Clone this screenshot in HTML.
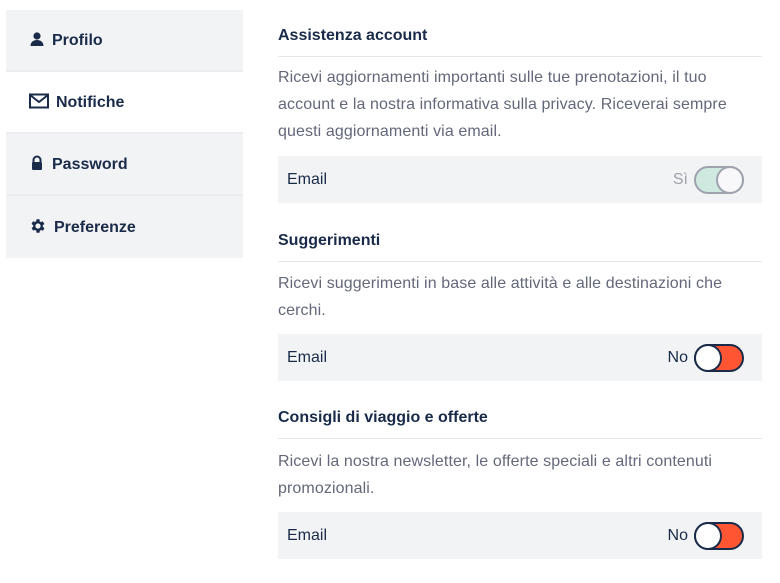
<!DOCTYPE html>
<html><head><meta charset="utf-8"><style>
*{box-sizing:border-box;margin:0;padding:0}
body{width:780px;height:583px;background:#fff;font-family:"Liberation Sans",sans-serif;color:#1a2b49;position:relative;overflow:hidden}
.side{position:absolute;left:6px;top:10px;width:237px;background:#f2f3f5}
.it{height:62px;display:flex;align-items:center;padding-left:23px;font-size:16px;font-weight:bold;border-bottom:2px solid #ebedf0;padding-top:2px}
.it.act{background:#fff}
.it svg{margin-right:7px;position:relative;top:-2px}
.main{position:absolute;left:278px;width:484px}
h3{font-size:16px;font-weight:bold;position:absolute;left:0}
.rule{position:absolute;left:0;width:484px;height:1px;background:#e6e7ea}
p{position:absolute;left:0;font-size:16px;line-height:27px;color:#63687a;width:470px;letter-spacing:0.1px}
.row{position:absolute;left:0;width:484px;height:47px;background:#f2f3f5;display:flex;align-items:center;padding:1px 18px 0 9px;font-size:16px}
.row .lab{margin-left:auto;margin-right:6px}
.tg{width:50px;height:28px;border-radius:14px;border:2px solid #1a2b49;background:#ff5533;position:relative}
.tg::after{content:"";position:absolute;left:0;top:0;width:24px;height:24px;border-radius:50%;background:#fff;box-shadow:0 0 0 2px #1a2b49}
.tg.on{background:#cfe9e0;border-color:#9ea3ad}
.tg.on::after{left:auto;right:0;background:#f8f8fb;box-shadow:0 0 0 2px #9ea3ad}
</style></head><body>
<div class="side">
<div class="it"><svg width="16" height="16" viewBox="0 0 16 16"><circle cx="8" cy="5" r="3.6" fill="#1a2b49"/><path d="M1.5 15c0-4 3-6 6.5-6s6.5 2 6.5 6z" fill="#1a2b49"/></svg>Profilo</div>
<div class="it act"><svg width="20" height="16" viewBox="0 0 20 16"><rect x="1" y="1.5" width="18" height="13" fill="none" stroke="#1a2b49" stroke-width="2"/><path d="M1 2l9 7 9-7" fill="none" stroke="#1a2b49" stroke-width="2"/></svg>Notifiche</div>
<div class="it"><svg width="16" height="16" viewBox="0 0 16 16"><path d="M4.5 7V5a3.5 3.5 0 0 1 7 0v2" fill="none" stroke="#1a2b49" stroke-width="2"/><rect x="3" y="7" width="10" height="8" rx="1" fill="#1a2b49"/></svg>Password</div>
<div class="it" style="border:0"><svg width="18" height="18" viewBox="0 0 24 24"><path fill="#1a2b49" d="M19.4 13a7.5 7.5 0 0 0 0-2l2.1-1.6-2-3.5-2.5 1a7.7 7.7 0 0 0-1.7-1L15 3h-4l-.4 2.7a7.7 7.7 0 0 0-1.7 1l-2.5-1-2 3.5L6.6 11a7.5 7.5 0 0 0 0 2l-2.1 1.6 2 3.5 2.5-1a7.7 7.7 0 0 0 1.7 1L11 21h4l.4-2.7a7.7 7.7 0 0 0 1.7-1l2.5 1 2-3.5zM13 15.5a3.5 3.5 0 1 1 0-7 3.5 3.5 0 0 1 0 7z" transform="translate(-1 0)"/></svg>Preferenze</div>
</div>
<div class="main" style="top:0">
<h3 style="top:27px">Assistenza account</h3>
<div class="rule" style="top:56px"></div>
<p style="top:64px">Ricevi aggiornamenti importanti sulle tue prenotazioni, il tuo account e la nostra informativa sulla privacy. Riceverai sempre questi aggiornamenti via email.</p>
<div class="row" style="top:156px">Email<span class="lab" style="color:#9ea3ad">Sì</span><div class="tg on"></div></div>
<h3 style="top:232px">Suggerimenti</h3>
<div class="rule" style="top:261px"></div>
<p style="top:270px">Ricevi suggerimenti in base alle attività e alle destinazioni che cerchi.</p>
<div class="row" style="top:334px">Email<span class="lab">No</span><div class="tg"></div></div>
<h3 style="top:409px">Consigli di viaggio e offerte</h3>
<div class="rule" style="top:438px"></div>
<p style="top:448px">Ricevi la nostra newsletter, le offerte speciali e altri contenuti promozionali.</p>
<div class="row" style="top:512px">Email<span class="lab">No</span><div class="tg"></div></div>
</div>
</body></html>
